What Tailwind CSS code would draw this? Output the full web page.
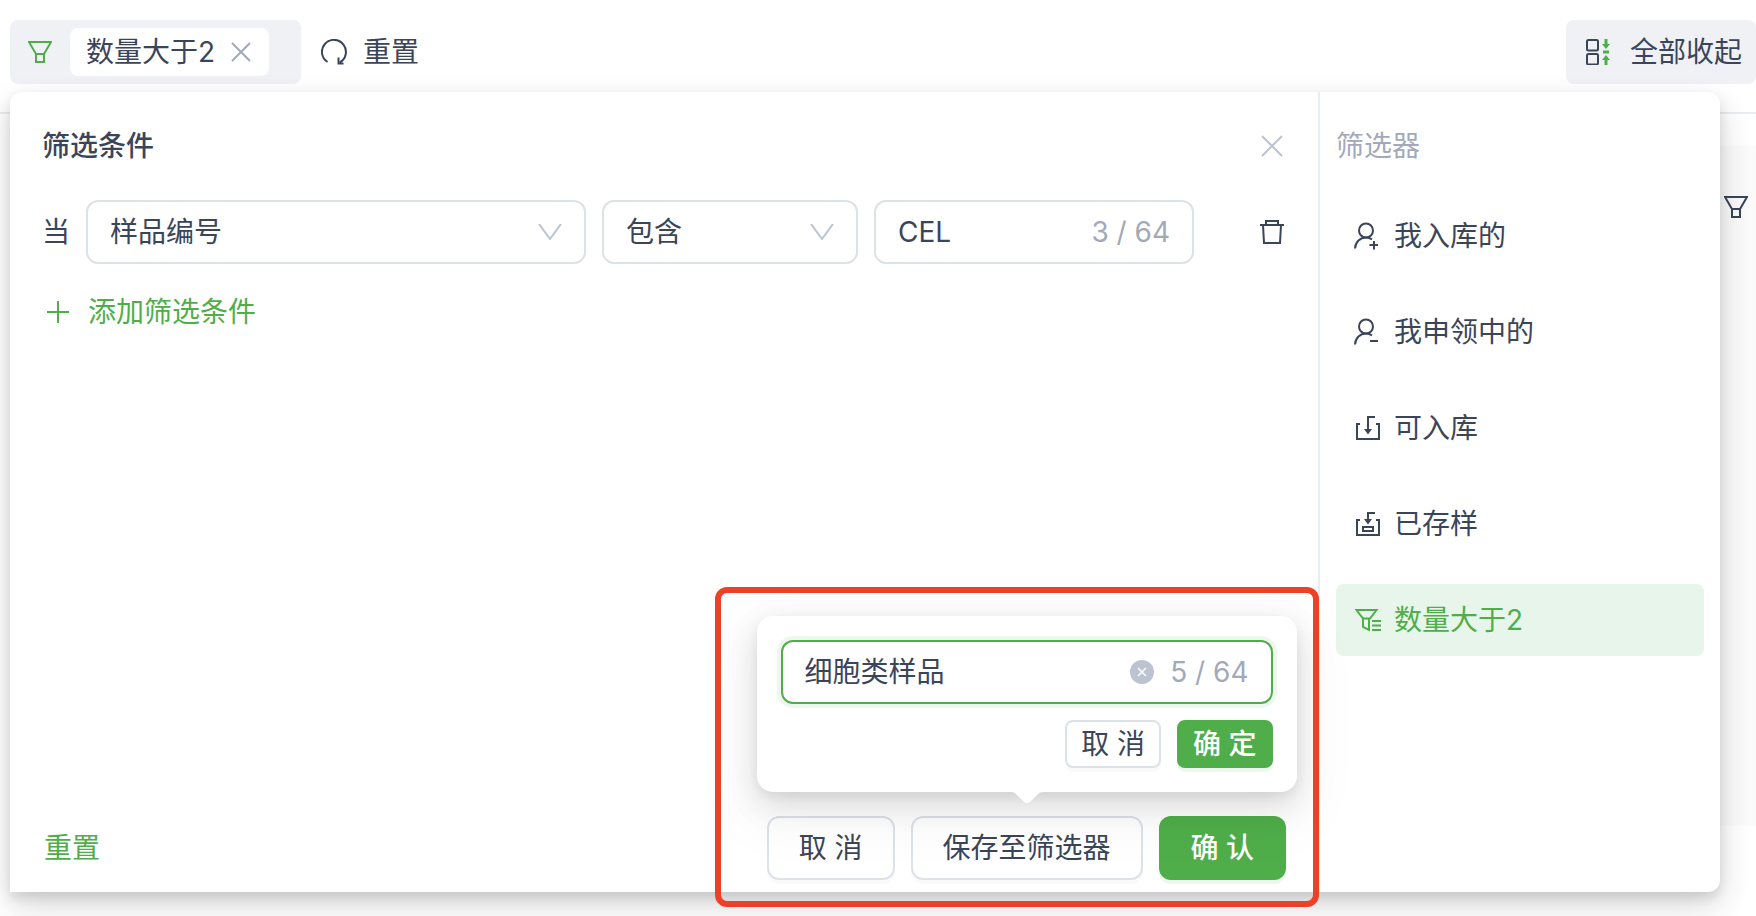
<!DOCTYPE html>
<html lang="zh-CN">
<head>
  <meta charset="UTF-8" />
  <meta name="viewport" content="width=device-width, initial-scale=1.0" />
  <title>筛选条件</title>
  <script src="https://cdn.jsdelivr.net/npm/@tailwindcss/browser@4"></script>
</head>
<body class="relative min-h-screen overflow-hidden bg-white font-['Inter','Noto_Sans_CJK_SC',sans-serif] text-[28px] leading-11 text-[#3b4559]">
  <!-- Toolbar -->
  <header class="flex h-[114px] items-start justify-between border-b-2 border-[#e8edf2] pt-5 pl-2.5">
    <div class="flex items-center">
      <div class="flex h-16 items-center rounded-lg bg-[#eff1f5] pr-8 pl-[18px]">
        <svg class="mr-[18px] size-6 text-[#4fae4a]" viewBox="0 0 24 24" fill="none" stroke="currentColor" stroke-width="2"><path d="M1 2h22l-7 12v8H8v-8zM8 14h8" /></svg>
        <div class="flex h-12 items-center gap-4 rounded-lg bg-white pr-[18px] pl-4">
          <span>数量大于2</span>
          <button type="button" aria-label="移除" class="text-[#a2a9b8]">
            <svg class="size-5" viewBox="0 0 20 20" fill="none" stroke="currentColor" stroke-width="2"><path d="M1 1l18 18M19 1L1 19" /></svg>
          </button>
        </div>
      </div>
      <button type="button" class="flex h-16 items-center gap-4 px-5">
        <svg class="size-[26px]" viewBox="0 0 26 26" fill="none" stroke="currentColor" stroke-width="2"><path d="M6.500 23A12 12 0 1 1 18.500 23.500" /><path d="M17.500 18.500v6h5" /></svg>
        重置
      </button>
    </div>
    <button type="button" class="flex h-16 items-center gap-[18px] rounded-lg bg-[#eff1f5] pr-[14px] pl-5">
      <svg class="size-[26px]" viewBox="0 0 26 26" fill="none" stroke="currentColor" stroke-width="2">
        <rect x="1" y="1" width="11" height="10.500" rx="1.500" />
        <rect x="1" y="15" width="11" height="10.500" rx="1.500" />
        <g class="text-[#4fae4a]">
          <path stroke="currentColor" stroke-width="3" d="M20 0v6M17 13h6M20 26v-6" />
          <path stroke="none" fill="currentColor" d="M16 5h8l-4 5zM16 21h8l-4-5z" />
        </g>
      </svg>
      全部收起
    </button>
  </header>

  <!-- Table area behind the panel -->
  <main class="ml-2.5 pt-8">
    <div class="flex h-170 items-start justify-end bg-[#fafafa] pt-[49px] pr-2">
      <button type="button" aria-label="筛选">
        <svg class="size-6" viewBox="0 0 24 24" fill="none" stroke="currentColor" stroke-width="2"><path d="M1 2h22l-7 12v8H8v-8zM8 14h8" /></svg>
      </button>
    </div>
  </main>

  <!-- Filter panel -->
  <div class="absolute top-23 right-9 left-2.5 flex min-h-200 rounded-xl rounded-bl-none bg-white shadow-[0_6px_12px_rgba(0,0,0,0.1),0_12px_32px_rgba(0,0,0,0.14),0_18px_40px_8px_rgba(0,0,0,0.02)]">
    <section class="relative flex flex-1 flex-col border-r-2 border-[#e8edf2] px-8 pt-8 pb-3">
      <div class="flex items-center justify-between">
        <h2 class="font-medium">筛选条件</h2>
        <button type="button" aria-label="关闭" class="flex size-7 items-center justify-center text-[#bcc4d2]">
          <svg class="size-[22px]" viewBox="0 0 22 22" fill="none" stroke="currentColor" stroke-width="2"><path d="M1 1l20 20M21 1L1 21" /></svg>
        </button>
      </div>

      <div class="mt-8 flex items-center gap-4">
        <label for="field">当</label>
        <div class="relative w-125">
          <select id="field" class="h-16 w-full appearance-none rounded-xl border-2 border-[#dde2e9] bg-white px-[22px]">
            <option>样品编号</option>
          </select>
          <svg class="pointer-events-none absolute top-6 right-6 h-4 w-6 text-[#bcc4d2]" viewBox="0 0 24 16" fill="none" stroke="currentColor" stroke-width="2"><path d="M1 0l11 15L23 0" /></svg>
        </div>
        <div class="relative w-64">
          <select aria-label="运算符" class="h-16 w-full appearance-none rounded-xl border-2 border-[#dde2e9] bg-white px-[22px]">
            <option>包含</option>
          </select>
          <svg class="pointer-events-none absolute top-6 right-6 h-4 w-6 text-[#bcc4d2]" viewBox="0 0 24 16" fill="none" stroke="currentColor" stroke-width="2"><path d="M1 0l11 15L23 0" /></svg>
        </div>
        <div class="flex h-16 w-80 items-center rounded-xl border-2 border-[#dde2e9] px-[22px]">
          <input type="text" aria-label="值" value="CEL" maxlength="64" class="min-w-0 flex-1 outline-none" />
          <span class="text-[#a2a9b8]">3 / 64</span>
        </div>
        <button type="button" aria-label="删除" class="ml-auto flex size-7 items-center justify-center">
          <svg class="size-6" viewBox="0 0 24 24" fill="none" stroke="currentColor" stroke-width="2"><path d="M0 5h24M6 5V1h12v4M3 5l1 18h16l1-18" /></svg>
        </button>
      </div>

      <button type="button" class="mt-4 ml-0.5 flex h-16 items-center gap-4 self-start text-[#4fae4a]">
        <svg class="size-7" viewBox="0 0 28 28" fill="none" stroke="currentColor" stroke-width="2"><path d="M3 14h22M14 3v22" /></svg>
        添加筛选条件
      </button>

      <div class="mt-auto flex items-center gap-4">
        <button type="button" class="mr-auto ml-0.5 text-[#4fae4a]">重置</button>
        <button type="button" class="h-16 rounded-xl border-2 border-[#dde2e9] bg-white px-[30px] shadow-[0_4px_0_rgba(0,0,0,0.02)]">取 消</button>
        <div class="relative">
          <button type="button" class="h-16 rounded-xl border-2 border-[#dde2e9] bg-white px-[30px] shadow-[0_4px_0_rgba(0,0,0,0.02)]">保存至筛选器</button>

          <!-- Name popover -->
          <div class="absolute bottom-full left-1/2 z-10 mb-6 w-135 -translate-x-1/2 rounded-2xl bg-white p-6 shadow-[0_4px_12px_rgba(0,0,0,0.06),0_12px_32px_rgba(0,0,0,0.12),0_18px_56px_16px_rgba(0,0,0,0.04)]">
            <div class="flex h-16 items-center rounded-xl border-2 border-[#4fae4a] bg-white px-[22px] shadow-[0_0_0_4px_#edf7ed]">
              <input type="text" aria-label="筛选器名称" value="细胞类样品" maxlength="64" class="min-w-0 flex-1 outline-none" />
              <button type="button" aria-label="清空" class="mr-4">
                <svg class="size-6" viewBox="0 0 24 24" fill="none"><circle cx="12" cy="12" r="12" fill="#bcc4d2" /><path d="M8 8l8 8M16 8l-8 8" stroke="#fff" stroke-width="1.500" /></svg>
              </button>
              <span class="text-[#a2a9b8]">5 / 64</span>
            </div>
            <div class="mt-4 flex justify-end gap-4">
              <button type="button" class="flex h-12 items-center rounded-lg border-2 border-[#dde2e9] bg-white px-[14px] shadow-[0_4px_0_rgba(0,0,0,0.02)]">取 消</button>
              <button type="button" class="flex h-12 items-center rounded-lg bg-[#4fae4a] px-4 font-medium text-white shadow-[0_4px_0_#edf7ed]">确 定</button>
            </div>
            <svg class="absolute top-full left-1/2 h-3 w-8 -translate-x-1/2 text-white" viewBox="0 0 32 12" fill="currentColor"><path d="M0 0c3 0 4 1 6 3l7 7q3 2.500 6 0l7-7c2-2 3-3 6-3z" /></svg>
          </div>
        </div>
        <button type="button" class="h-16 rounded-xl bg-[#4fae4a] px-8 font-medium text-white shadow-[0_4px_0_#edf7ed]">确 认</button>
      </div>

      <!-- Highlight frame -->
      <div class="pointer-events-none absolute -right-px -bottom-[15px] z-20 h-80 w-151 rounded-xl border-6 border-[#ec4126]"></div>
    </section>

    <aside class="w-100 px-4 pt-8">
      <h2 class="text-[#a2a9b8]">筛选器</h2>
      <ul class="mt-8 flex flex-col gap-6">
        <li>
          <a href="#" class="flex h-18 items-center gap-4 rounded-lg px-[18px]">
            <svg class="size-6 overflow-visible" viewBox="0 0 24 24" fill="none" stroke="currentColor" stroke-width="2"><circle cx="12" cy="6.500" r="7" /><path d="M1 24.500C1.500 18 6 13.500 12 13.500c2.500 0 4.500.8 6 2M15.500 21h8.500M20 17v8.500" /></svg>
            我入库的
          </a>
        </li>
        <li>
          <a href="#" class="flex h-18 items-center gap-4 rounded-lg px-[18px]">
            <svg class="size-6 overflow-visible" viewBox="0 0 24 24" fill="none" stroke="currentColor" stroke-width="2"><circle cx="12" cy="6.500" r="7" /><path d="M1 24.500C1.500 18 6 13.500 12 13.500c2.500 0 4.500.8 6 2M16 21h8" /></svg>
            我申领中的
          </a>
        </li>
        <li>
          <a href="#" class="flex h-18 items-center gap-4 rounded-lg px-[18px]">
            <svg class="size-6 overflow-visible" viewBox="0 0 24 24" fill="none" stroke="currentColor" stroke-width="2"><path d="M6 8H3v15h22V8h-3M21 1h-7v14" /><path fill="currentColor" stroke="none" d="M10 13h8l-4 5.500z" /></svg>
            可入库
          </a>
        </li>
        <li>
          <a href="#" class="flex h-18 items-center gap-4 rounded-lg px-[18px]">
            <svg class="size-6 overflow-visible" viewBox="0 0 24 24" fill="none" stroke="currentColor" stroke-width="2"><path d="M6 8H3v15h22V8h-3M21 1h-7v8M9 15h10v4H9z" /><path fill="currentColor" stroke="none" d="M10 7h8l-4 5.500z" /></svg>
            已存样
          </a>
        </li>
        <li>
          <a href="#" class="flex h-18 items-center gap-4 rounded-lg bg-[#e7f5ea] px-[18px] text-[#4fae4a]">
            <svg class="size-6 overflow-visible" viewBox="0 0 24 24" fill="none" stroke="currentColor" stroke-width="2"><path d="M2.500 2h20L16 10.500H9zM9 10.500v8.500l6 3V10.500M18 13h9M18 17.500h9M18 22h9" /></svg>
            数量大于2
          </a>
        </li>
      </ul>
    </aside>
  </div>
</body>
</html>
